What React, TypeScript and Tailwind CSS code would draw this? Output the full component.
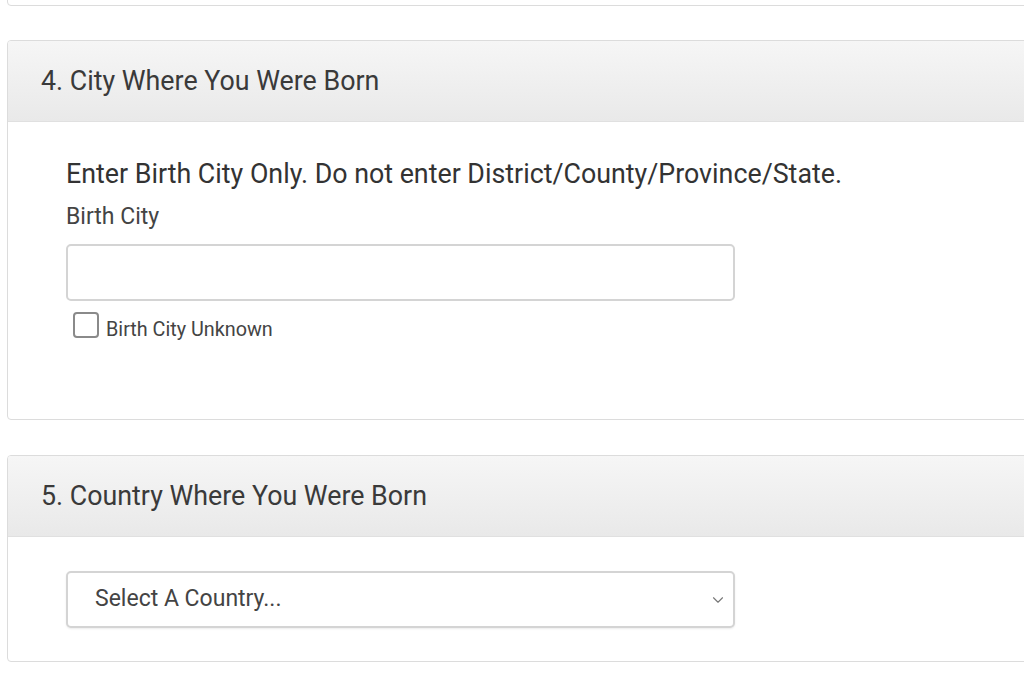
import React from 'react';
import { ChevronDown } from 'lucide-react';

const Card: React.FC<{ title: string; children: React.ReactNode; bodyClass?: string }> = ({ title, children, bodyClass }) => (
  <section className="ml-[7px] -mr-4 rounded-[4px] border border-[#dcdcdc] bg-white overflow-hidden">
    <div className="flex h-[81px] items-center border-b border-[#e0e0e0] bg-gradient-to-b from-[#f6f6f6] to-[#e9e9e9] px-[33px]">
      <h2 className="text-[26.8px] text-[#3a3a3a]">{title}</h2>
    </div>
    <div className={bodyClass}>{children}</div>
  </section>
);

export default function App() {
  return (
    <div className="h-[683px] w-[1024px] overflow-hidden bg-white font-['Roboto',sans-serif]">
      {/* previous card (cut off) */}
      <div className="ml-[7px] -mr-4 -mt-8 h-[38px] rounded-[4px] border border-[#dcdcdc] bg-white" />

      <div className="mt-[34px]">
        <Card title="4. City Where You Were Born" bodyClass="px-[58px] pt-[36px] pb-[77px]">
          <p className="text-[26.8px] leading-[32px] text-[#333]">
            Enter Birth City Only. Do not enter District/County/Province/State.
          </p>
          <label className="mt-[13px] block text-[23px] leading-[28px] text-[#444]">Birth City</label>
          <input
            type="text"
            className="mt-[13px] block h-[57px] w-[669px] rounded-[5px] border-2 border-[#d4d4d4] bg-white px-3 text-[20px] outline-none"
          />
          <label className="mt-[11px] flex h-[30px] items-start gap-[7px] pl-[7px] text-[19.8px] text-[#444]">
            <span className="h-[26px] w-[26px] shrink-0 rounded-[4px] border-2 border-[#8a8a8a] bg-white" />
            <span className="mt-[6px] leading-[24px]">Birth City Unknown</span>
          </label>
        </Card>
      </div>

      <div className="mt-[35px]">
        <Card title="5. Country Where You Were Born" bodyClass="px-[58px] pt-[34px] pb-[33px]">
          <div className="flex h-[57px] w-[669px] items-center justify-between rounded-[5px] border-2 border-[#d4d4d4] bg-white pl-[27px] pr-[6px] shadow-[0_1px_2px_rgba(0,0,0,0.08)]">
            <span className="text-[23px] text-[#444]">Select A Country...</span>
            <ChevronDown className="h-[18px] w-[18px] text-[#777]" strokeWidth={1.5} />
          </div>
        </Card>
      </div>
    </div>
  );
}
